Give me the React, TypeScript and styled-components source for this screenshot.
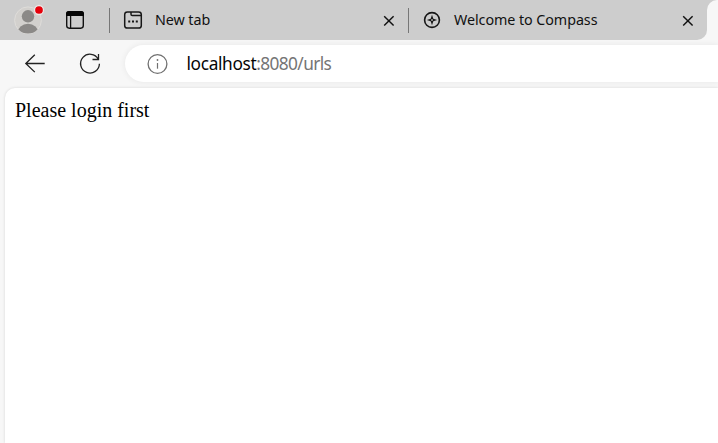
import React from "react";
import styled, { createGlobalStyle } from "styled-components";

const GlobalStyle = createGlobalStyle`
  * { box-sizing: border-box; }
  html, body { margin: 0; overflow: hidden; background: #f7f7f7; }
`;

const Window = styled.div`
  width: 718px;
  height: 443px;
  display: flex;
  flex-direction: column;
  overflow: hidden;
  background: #f7f7f7;
`;

const TabStrip = styled.div`
  height: 40px;
  flex: none;
  display: flex;
  background: #f7f7f7;
`;

const InactiveTabs = styled.div`
  width: 707px;
  height: 40px;
  flex: none;
  display: flex;
  align-items: center;
  background: #cdcdcd;
  border-bottom-right-radius: 10px;
`;

const ActiveTabGap = styled.div`
  flex: 1;
  background: #cdcdcd;
  height: 20px;
`;

const ActiveTab = styled.div`
  height: 100%;
  background: #f7f7f7;
  border-top-left-radius: 10px;
`;

const StripButton = styled.button<{ $width: number; $before: number }>`
  width: ${(p) => p.$width}px;
  height: 40px;
  margin: 0 0 0 ${(p) => p.$before}px;
  padding: 0;
  border: 0;
  background: none;
  flex: none;
  display: flex;
`;

const TabList = styled.div`
  display: flex;
  margin-left: 24px;
`;

const Tab = styled.div`
  width: 299px;
  height: 40px;
  flex: none;
  display: flex;
  align-items: center;
`;

const Divider = styled.span`
  width: 1px;
  height: 25px;
  flex: none;
  background: #777;
`;

const TabIcon = styled.svg`
  width: 20px;
  height: 20px;
  flex: none;
  margin: 0 12px 0 13px;
`;

const TabTitle = styled.span`
  flex: 1;
  font: 14.3px/20px "Noto Sans", "Open Sans", sans-serif;
  letter-spacing: -0.06px;
  white-space: nowrap;
  color: #111;
`;

const CloseButton = styled.button`
  width: 12px;
  height: 12px;
  margin: 1px 13px 0 0;
  padding: 0;
  border: 0;
  background: none;
  flex: none;
  display: flex;
`;

const Toolbar = styled.div`
  height: 47px;
  flex: none;
  display: flex;
  align-items: center;
  padding-left: 23px;
`;

const ToolButton = styled.button`
  width: 24px;
  height: 24px;
  margin-right: 31px;
  padding: 0;
  border: 0;
  background: none;
  flex: none;
  display: flex;
`;

const AddressBar = styled.div`
  flex: 1;
  height: 37px;
  margin-left: -8px;
  padding-left: 21px;
  display: flex;
  align-items: center;
  background: #fff;
  border-radius: 19px 0 0 19px;
  box-shadow: 0 0 6px rgba(0, 0, 0, 0.07);
`;

const InfoIcon = styled.svg`
  width: 22px;
  height: 22px;
  flex: none;
  margin-right: 18.5px;
`;

const Url = styled.span`
  font: 17.3px/24px "Noto Sans", "Open Sans", sans-serif;
  letter-spacing: -0.62px;
  color: #757575;
`;

const Host = styled.span`
  letter-spacing: -0.36px;
  color: #050505;
`;

const Page = styled.main`
  flex: 1;
  margin: 1px 0 0 5px;
  padding: 11px 10px;
  background: #fff;
  border-top-left-radius: 10px;
  box-shadow: 0 0 3px rgba(0, 0, 0, 0.14);
`;

const Message = styled.p`
  margin: 0;
  font: 20px/23px "Liberation Serif", "Times New Roman", serif;
  color: #000;
`;

const Close = () => (
  <CloseButton aria-label="Close tab">
    <svg width="12" height="12" viewBox="0 0 12 12">
      <path d="M1.2 1.2 10.6 10.6M10.6 1.2 1.2 10.6" fill="none" stroke="#111" strokeWidth="1.45" />
    </svg>
  </CloseButton>
);

export default function App() {
  return (
    <Window>
      <GlobalStyle />
      <TabStrip>
        <InactiveTabs>
          <StripButton $width={32} $before={13} aria-label="Profile">
            <svg width="32" height="40" viewBox="0 0 32 40">
              <defs>
                <clipPath id="avatar">
                  <circle cx="15" cy="20.3" r="13.2" />
                </clipPath>
              </defs>
              <circle cx="15" cy="20.3" r="13.4" fill="#d2d0cd" stroke="#dfddda" />
              <g clipPath="url(#avatar)" fill="#8b8987">
                <circle cx="15" cy="16.3" r="6.2" />
                <ellipse cx="15" cy="33" rx="10.5" ry="9.3" />
              </g>
              <circle cx="26" cy="10" r="4.5" fill="#e6000b" stroke="#ebe7e5" strokeWidth="1.3" />
            </svg>
          </StripButton>
          <StripButton $width={20} $before={20} aria-label="Tab actions">
            <svg width="20" height="40" viewBox="0 0 20 40">
              <rect x="1.7" y="11.8" width="16.6" height="16.4" rx="2.6" fill="none" stroke="#111" strokeWidth="1.4" />
              <path d="M1 16V14a3 3 0 0 1 3-3h12a3 3 0 0 1 3 3v2Z" fill="#050505" />
              <path d="M5.6 16v12" stroke="#111" strokeWidth="1.3" />
            </svg>
          </StripButton>
          <TabList>
            <Tab>
              <Divider />
              <TabIcon viewBox="0 0 20 20" fill="none" stroke="#171717" strokeWidth="1.5">
                <rect x="1.7" y="1.9" width="16.6" height="16.2" rx="2.7" />
                <path d="M8 2v2.2c0 .8.5 1.3 1.3 1.3h9" />
                <path d="M5.2 11.5h2m1.8 0h2m1.8 0h2" strokeWidth="2" />
              </TabIcon>
              <TabTitle>New tab</TabTitle>
              <Close />
            </Tab>
            <Tab>
              <Divider />
              <TabIcon viewBox="0 0 20 20">
                <circle cx="10" cy="10" r="7.4" fill="none" stroke="#171717" strokeWidth="1.6" />
                <path d="m10 4.8 1.3 3.9 3.9 1.3-3.9 1.3L10 15.2l-1.3-3.9L4.8 10l3.9-1.3Z" fill="#171717" />
                <circle cx="10" cy="10" r="1" fill="#aaa" />
              </TabIcon>
              <TabTitle>Welcome to Compass</TabTitle>
              <Close />
            </Tab>
          </TabList>
        </InactiveTabs>
        <ActiveTabGap>
          <ActiveTab />
        </ActiveTabGap>
      </TabStrip>
      <Toolbar>
        <ToolButton aria-label="Back">
          <svg width="24" height="24" viewBox="0 0 24 24" fill="none" stroke="#222" strokeWidth="1.3">
            <path d="M21.7 11.5H2.8M11.8 2.7l-9 8.8 9 8.6" />
          </svg>
        </ToolButton>
        <ToolButton aria-label="Refresh">
          <svg width="24" height="24" viewBox="0 0 24 24" fill="none" stroke="#222" strokeWidth="1.3">
            <path d="M20.3 7.2A9.4 9.4 0 1 0 21.4 11.7M20.5 2v5.5h-6" />
          </svg>
        </ToolButton>
        <AddressBar>
          <InfoIcon viewBox="0 0 22 22">
            <circle cx="11.5" cy="11" r="9.4" fill="none" stroke="#707070" strokeWidth="1.3" />
            <path d="M11.5 10v5.7" stroke="#707070" strokeWidth="1.2" />
            <circle cx="11.5" cy="7" r="0.9" fill="#707070" />
          </InfoIcon>
          <Url>
            <Host>localhost</Host>:8080/urls
          </Url>
        </AddressBar>
      </Toolbar>
      <Page>
        <Message>Please login first</Message>
      </Page>
    </Window>
  );
}
